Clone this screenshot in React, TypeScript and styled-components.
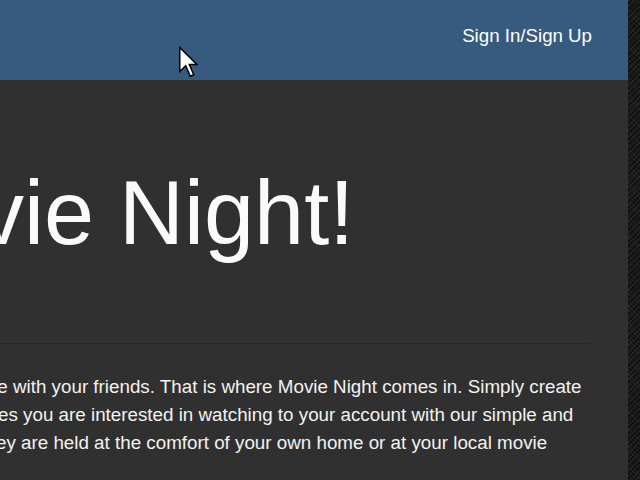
import React from "react";
import styled, { createGlobalStyle } from "styled-components";

const GlobalStyle = createGlobalStyle`
  html, body {
    margin: 0;
    height: 100%;
  }
  body {
    overflow: hidden;
    font-family: "Liberation Sans", Arial, Helvetica, sans-serif;
    background-color: #1c1c1c;
    background-image:
      repeating-linear-gradient(45deg, rgba(255, 255, 255, 0.05) 0 1px, transparent 1px 3px),
      repeating-linear-gradient(-45deg, rgba(0, 0, 0, 0.45) 0 2px, transparent 2px 4px);
  }
`;

const Page = styled.div`
  display: flex;
  height: 100vh;
`;

const Main = styled.div`
  position: relative;
  flex: 0 0 628px;
  display: flex;
  flex-direction: column;
  background: #303030;
  overflow: hidden;
`;

const Navbar = styled.header`
  flex: 0 0 80px;
  display: flex;
  justify-content: flex-end;
  align-items: flex-start;
  padding: 24px 36px 0 0;
  box-sizing: border-box;
  background: #375a7f;
`;

const NavLink = styled.a`
  color: #ffffff;
  font-size: 18.7px;
  line-height: 24px;
  text-decoration: none;
  cursor: pointer;
`;

const Hero = styled.section`
  flex: 1;
  padding: 84px 38px 0 0;
`;

/* the page is scrolled sideways, so the start of the content sits off-screen */
const Scrolled = styled.div`
  margin-left: -146px;
  width: 736px;
`;

const Title = styled.h1`
  margin: 0;
  font-size: 90px;
  line-height: 99px;
  font-weight: 400;
  color: #fafafa;
  white-space: nowrap;
`;

const Divider = styled.hr`
  margin: 80px 0 0;
  border: 0;
  border-top: 1px solid #272727;
`;

const Lead = styled.p`
  margin: 29px 0 0;
  font-size: 18.8px;
  line-height: 28px;
  color: #f2f2f2;
  white-space: nowrap;
`;

const Pointer = styled.svg`
  position: absolute;
  left: 178px;
  top: 46px;
  width: 20px;
  height: 33px;
  pointer-events: none;
`;

export default function App() {
  return (
    <>
      <GlobalStyle />
      <Page>
        <Main>
          <Navbar>
            <NavLink>Sign In/Sign Up</NavLink>
          </Navbar>
          <Hero>
            <Scrolled>
              <Title>Movie Night!</Title>
              <Divider />
              <Lead>
                Try to see a movie with your friends. That is where Movie Night comes in. Simply create
                <br />
                groups, add movies you are interested in watching to your account with our simple and
                <br />
                tools. Whether they are held at the comfort of your own home or at your local movie
                <br />
                theater.
              </Lead>
            </Scrolled>
          </Hero>
          <Pointer viewBox="0 0 13 22">
            <path
              d="M1 1 L1 17 L5 13.2 L8 20.2 L10.3 19.2 L7.4 12.3 L12.4 12.3 Z"
              fill="#ffffff"
              stroke="#000000"
              strokeWidth="1"
              strokeLinejoin="miter"
            />
          </Pointer>
        </Main>
      </Page>
    </>
  );
}
